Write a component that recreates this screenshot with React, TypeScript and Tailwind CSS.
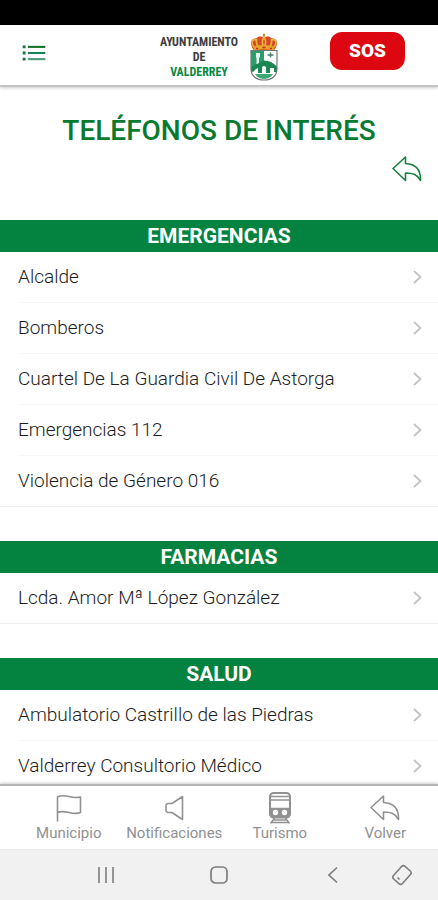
import React from "react";

type SectionData = {
  title: string;
  items: string[];
};

const sections: SectionData[] = [
  {
    title: "EMERGENCIAS",
    items: [
      "Alcalde",
      "Bomberos",
      "Cuartel De La Guardia Civil De Astorga",
      "Emergencias 112",
      "Violencia de Género 016",
    ],
  },
  { title: "FARMACIAS", items: ["Lcda. Amor Mª López González"] },
  {
    title: "SALUD",
    items: ["Ambulatorio Castrillo de las Piedras", "Valderrey Consultorio Médico"],
  },
];

const BackArrow = ({ className }: { className: string }) => (
  <svg viewBox="0 0 30 26" className={className} fill="none" stroke="currentColor" strokeWidth="1.6" strokeLinejoin="round" aria-hidden="true">
    <path d="M1 12.5 13.5 1v6.500C23 8 29 13 28.500 24.500 25.500 18.500 21 17 13.500 17v7.500Z" />
  </svg>
);

const FlagIcon = () => (
  <svg viewBox="0 0 26 28" className="h-7 w-7" fill="none" stroke="currentColor" strokeWidth="1.6" strokeLinejoin="round" strokeLinecap="round" aria-hidden="true">
    <path d="M1.500 27V3C5 1 9 1.500 13 2.500s7.500 1.500 11.500.5V18.500c-4 1.500-7.500 1-11.500 0s-8-1.500-11.500 0" />
  </svg>
);

const SpeakerIcon = () => (
  <svg viewBox="0 0 28 28" className="h-7 w-7" fill="none" stroke="currentColor" strokeWidth="1.600" strokeLinejoin="round" aria-hidden="true">
    <path d="M7.500 9.500h4.500L22.500 2.500v23L12 18.500H7.500L6 17v-6Z" />
  </svg>
);

const TrainIcon = () => (
  <svg viewBox="0 0 24 32" className="h-8 w-6" fill="none" stroke="currentColor" strokeWidth="2" aria-hidden="true">
    <rect x="2" y="1" width="20" height="24.500" rx="3.500" />
    <path d="M3 4.500h18M3 8h18M3 16.500h18" strokeWidth="1.500" />
    <path d="M3 17h18v6a2.500 2.500 0 0 1-2.500 2.500h-13A2.500 2.500 0 0 1 3 23Z" fill="currentColor" stroke="none" />
    <circle cx="7.500" cy="20.500" r="2.700" fill="#fff" stroke="none" />
    <circle cx="16.500" cy="20.500" r="2.700" fill="#fff" stroke="none" />
    <path d="m6.500 26-4 5.500M17.500 26l4 5.500M5.500 28h13M3.500 30.500h17" strokeWidth="1.300" />
  </svg>
);

const Shield = () => (
  <svg viewBox="0 0 28 48" className="h-12 w-7" aria-hidden="true">
    {/* Crown */}
    <path d="M3.500 17C-1 10 1 5 6 5.500 8 3 11 3 14 4c3-1 6-1 8 1.500 5-.5 7 4.500 2.500 11.500Z" fill="#d9472b" />
    <path d="M14 .5v3.500M12.500 2h3" stroke="#b8860b" strokeWidth="1.200" />
    <path d="M4 14C0 9 3 6 6.500 6.500 6 9 7 12 8 14M24 14c4-5 1-8-2.500-7.500.5 2.500-.5 5.500-1.500 7.500M14 4c-2 3-2 7 0 10 2-3 2-7 0-10" fill="none" stroke="#e8b53a" strokeWidth="1.700" />
    <path d="M3.500 13.500q10.500-3 21 0l-.5 4q-10-2.500-20 0Z" fill="#e8a52c" />
    <path d="M6 15.500h2M12.500 14.500h3M20 15.500h2" stroke="#c3272b" strokeWidth="1.500" />
    {/* Field: tower on green, cross on white, bridge below */}
    <path d="M1 17.500h26V36c0 6.500-5 11-13 11S1 42.500 1 36Z" fill="#fff" />
    <path d="M1 17.500h13V28L1 36Z" fill="#2a9d6c" />
    <path d="M6 20h4v4l-1 1v6H6.500v-6L6 24Z" fill="#e3f3ea" />
    <path d="M20.500 19.500v5M17.500 22h6" stroke="#4d8068" strokeWidth="1.500" />
    <path d="M1 34 14 27.500c5 0 9 2 13 6V39h-3v-4h-4v5h-4v-6c-2-2-4-1-4 1v5H8v-5l-2 1-3 3-2-1Z" fill="#1b8751" />
    <path d="M5 41h18q-2.500 4.500-9 5-6.500-.5-9-5Z" fill="#3ca874" />
    <path d="M1 17.500h26V36c0 6.500-5 11-13 11S1 42.500 1 36Z" fill="none" stroke="#707a75" strokeWidth="1.200" />
  </svg>
);

const MenuIcon = () => (
  <svg viewBox="0 0 24 17" className="h-4 w-6" aria-hidden="true">
    <path d="M0 2h3M0 8.500h3M0 15h3" stroke="#12733c" strokeWidth="3" />
    <path d="M5.500 2H24" stroke="#0f7427" strokeWidth="2.200" />
    <path d="M5.500 8.500H24" stroke="#148355" strokeWidth="2.200" />
    <path d="M5.500 15H24" stroke="#4a9c78" strokeWidth="2.200" />
  </svg>
);

const Header = () => (
  <header className="z-10 shrink-0 border-b-2 border-[#c4c4c4] bg-white shadow-[0_1px_3px_rgba(0,0,0,0.2)]">
    <div className="grid h-15 grid-cols-[1fr_auto_1fr] items-center">
      <button type="button" aria-label="Menú" className="ml-[22px] w-6 justify-self-start pb-1">
        <MenuIcon />
      </button>
      <div className="flex items-center gap-3 pt-1">
        <div className="text-center font-['Roboto_Condensed','Liberation_Sans_Narrow','Liberation_Sans',sans-serif] text-[12px] leading-[15px] font-bold text-[#3d3d3d]">
          <p>AYUNTAMIENTO</p>
          <p>DE</p>
          <p className="text-[#07883f]">VALDERREY</p>
        </div>
        <Shield />
      </div>
      <button
        type="button"
        className="mr-[33px] mb-2 h-[38px] w-[75px] justify-self-end rounded-xl bg-[#dc0711] text-[19px] leading-5 font-black text-white"
      >
        SOS
      </button>
    </div>
  </header>
);

const Section = ({ title, items }: SectionData) => (
  <section className="mb-[34px]">
    <h2 className="bg-[#04823f] text-center text-[21px] leading-8 font-bold text-white">{title}</h2>
    <ul className="border-b border-[#ececec]">
      {items.map((item, i) => (
        <li key={item} className="pl-[18px]">
          <a
            href="#"
            className={`flex items-center justify-between pr-4 text-[19px] leading-[50px] font-light text-[#1c1c1c] ${
              i < items.length - 1 ? "border-b border-[#f7f7f7]" : ""
            }`}
          >
            {item}
            <svg viewBox="0 0 9 14" className="h-3.5 w-[9px]" fill="none" stroke="#c2c2c2" strokeWidth="1.800" aria-hidden="true">
              <path d="m1 1 6.500 6L1 13" />
            </svg>
          </a>
        </li>
      ))}
    </ul>
  </section>
);

const tabs = [
  { label: "Municipio", icon: <FlagIcon /> },
  { label: "Notificaciones", icon: <SpeakerIcon /> },
  { label: "Turismo", icon: <TrainIcon /> },
  { label: "Volver", icon: <BackArrow className="h-[26px] w-[30px]" /> },
];

const App: React.FC = () => {
  return (
    <div className="flex h-screen flex-col overflow-hidden bg-white font-['Roboto',sans-serif]">
      <div className="h-[25px] shrink-0 bg-black" />
      <Header />

      <main className="min-h-0 flex-1 overflow-y-auto [scrollbar-width:none]">
        <h1 className="pt-6 text-center text-[28px] leading-10 font-medium text-[#087a2f]">
          TELÉFONOS DE INTERÉS
        </h1>
        <div className="flex justify-end pt-[5px] pr-4 pb-[38px]">
          <button type="button" aria-label="Volver" className="text-[#16803f]">
            <BackArrow className="h-[26px] w-[30px]" />
          </button>
        </div>
        {sections.map((s) => (
          <Section key={s.title} title={s.title} items={s.items} />
        ))}
      </main>

      <nav className="z-10 flex h-[65px] shrink-0 border-t-2 border-[#b5b5b5] bg-white pl-4 shadow-[0_-1px_3px_rgba(0,0,0,0.2)]">
        {tabs.map((tab) => (
          <button
            key={tab.label}
            type="button"
            className="flex flex-1 basis-0 flex-col items-center pb-2 text-[15px] leading-4 text-[#919191]"
          >
            <span className="flex h-10 items-end pb-px">
              <span className="flex h-8 items-center">{tab.icon}</span>
            </span>
            {tab.label}
          </button>
        ))}
      </nav>

      {/* Android system bar */}
      <div className="grid h-[51px] shrink-0 grid-cols-[1fr_auto_1fr] items-center bg-[#f1f1f1] text-[#7d7d7d]">
        <button type="button" aria-label="Recientes" className="mr-[95px] justify-self-end">
          <svg viewBox="0 0 18 18" className="h-[18px] w-[18px]" stroke="currentColor" strokeWidth="1.600" aria-hidden="true">
            <path d="M2 1v16M9 1v16M16 1v16" />
          </svg>
        </button>
        <button type="button" aria-label="Inicio">
          <svg viewBox="0 0 18 18" className="h-[18px] w-[18px]" fill="none" stroke="currentColor" strokeWidth="1.700" aria-hidden="true">
            <rect x="1" y="1" width="16" height="16" rx="4.500" />
          </svg>
        </button>
        <div className="flex items-center justify-between pr-[25px] pl-[100px]">
          <button type="button" aria-label="Atrás">
            <svg viewBox="0 0 10 18" className="h-[18px] w-[10px]" fill="none" stroke="currentColor" strokeWidth="1.700" aria-hidden="true">
              <path d="M9 1.500 1 9l8 7.500" />
            </svg>
          </button>
          <button type="button" aria-label="Girar pantalla">
            <svg viewBox="0 0 22 22" className="h-[22px] w-[22px]" fill="none" stroke="currentColor" strokeWidth="1.600" aria-hidden="true">
              <rect x="5" y="2.500" width="12" height="17" rx="2.500" transform="rotate(42 11 11)" />
              <path d="m6.500 13.500 2 2" />
            </svg>
          </button>
        </div>
      </div>
    </div>
  );
};

export default App;
